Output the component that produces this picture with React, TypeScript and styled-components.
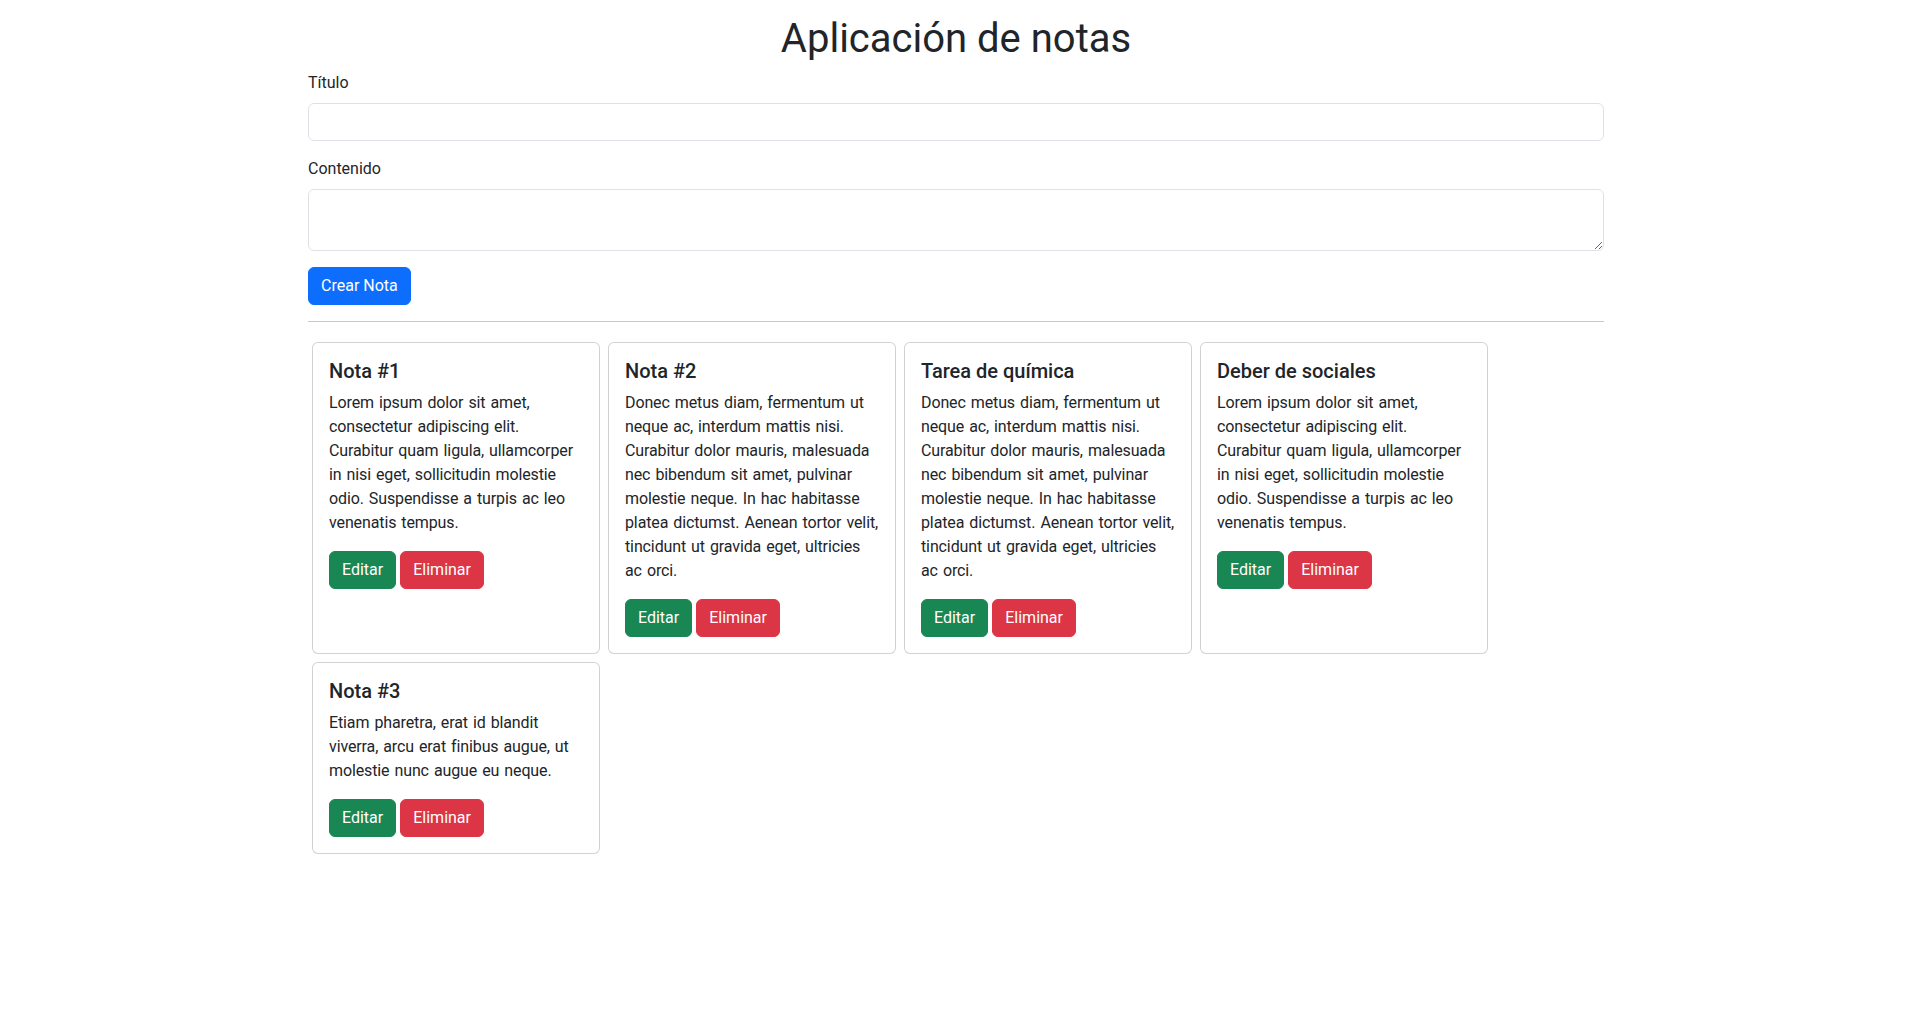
import React from "react";
import styled, { createGlobalStyle } from "styled-components";

const GlobalStyle = createGlobalStyle`
  *, *::before, *::after { box-sizing: border-box; }
  body {
    margin: 0;
    font-family: Roboto, "Noto Sans", "Liberation Sans", sans-serif;
    font-size: 16px;
    line-height: 1.5;
    color: #212529;
    background: #fff;
  }
`;

const Container = styled.div`
  width: 100%;
  max-width: 1320px;
  margin: 0 auto;
  padding: 15px 12px 0;
`;

const Title = styled.h1`
  margin: 0 0 8px;
  font-size: 40px;
  font-weight: 400;
  line-height: 1.2;
  text-align: center;
`;

const FormGroup = styled.div`
  margin-bottom: 16px;
`;

const Label = styled.label`
  display: inline-block;
  margin-bottom: 8px;
`;

const fieldCss = `
  display: block;
  width: 100%;
  padding: 6px 12px;
  font: inherit;
  font-size: 16px;
  line-height: 1.5;
  color: #212529;
  background: #fff;
  border: 1px solid #dee2e6;
  border-radius: 6px;
  outline: none;
`;

const Input = styled.input`
  ${fieldCss}
  height: 38px;
`;

const TextArea = styled.textarea`
  ${fieldCss}
  height: 62px;
  resize: vertical;
`;

const Button = styled.button<{ $variant: "primary" | "success" | "danger" }>`
  display: inline-block;
  padding: 6px 12px;
  font: inherit;
  font-size: 16px;
  line-height: 1.5;
  color: #fff;
  border-radius: 6px;
  cursor: pointer;
  background: ${(p) =>
    p.$variant === "primary" ? "#0d6efd" : p.$variant === "success" ? "#198754" : "#dc3545"};
  border: 1px solid
    ${(p) =>
      p.$variant === "primary" ? "#0d6efd" : p.$variant === "success" ? "#198754" : "#dc3545"};
`;

const Divider = styled.hr`
  margin: 16px 0;
  border: 0;
  border-top: 1px solid #212529;
  opacity: 0.25;
`;

const CardGrid = styled.div`
  display: flex;
  flex-wrap: wrap;
`;

const Card = styled.div`
  width: 288px;
  margin: 4px;
  display: flex;
  flex-direction: column;
  border: 1px solid rgba(0, 0, 0, 0.175);
  border-radius: 6px;
  background: #fff;
`;

const CardBody = styled.div`
  flex: 1 1 auto;
  padding: 16px;
`;

const CardTitle = styled.h5`
  margin: 0 0 8px;
  font-size: 20px;
  font-weight: 500;
  line-height: 1.2;
`;

const CardText = styled.p`
  margin: 0 0 16px;
  letter-spacing: -0.12px;
  word-spacing: 1.2px;
`;

const ButtonRow = styled.div`
  display: flex;
  gap: 4px;
`;

const notes = [
  {
    title: "Nota #1",
    text: "Lorem ipsum dolor sit amet, consectetur adipiscing elit. Curabitur quam ligula, ullamcorper in nisi eget, sollicitudin molestie odio. Suspendisse a turpis ac leo venenatis tempus.",
  },
  {
    title: "Nota #2",
    text: "Donec metus diam, fermentum ut neque ac, interdum mattis nisi. Curabitur dolor mauris, malesuada nec bibendum sit amet, pulvinar molestie neque. In hac habitasse platea dictumst. Aenean tortor velit, tincidunt ut gravida eget, ultricies ac orci.",
  },
  {
    title: "Tarea de química",
    text: "Donec metus diam, fermentum ut neque ac, interdum mattis nisi. Curabitur dolor mauris, malesuada nec bibendum sit amet, pulvinar molestie neque. In hac habitasse platea dictumst. Aenean tortor velit, tincidunt ut gravida eget, ultricies ac orci.",
  },
  {
    title: "Deber de sociales",
    text: "Lorem ipsum dolor sit amet, consectetur adipiscing elit. Curabitur quam ligula, ullamcorper in nisi eget, sollicitudin molestie odio. Suspendisse a turpis ac leo venenatis tempus.",
  },
  {
    title: "Nota #3",
    text: "Etiam pharetra, erat id blandit viverra, arcu erat finibus augue, ut molestie nunc augue eu neque.",
  },
];

export default function App() {
  return (
    <>
      <GlobalStyle />
      <Container>
        <Title>Aplicación de notas</Title>
        <FormGroup>
          <Label htmlFor="titulo">Título</Label>
          <Input id="titulo" type="text" />
        </FormGroup>
        <FormGroup>
          <Label htmlFor="contenido">Contenido</Label>
          <TextArea id="contenido" rows={2} />
        </FormGroup>
        <Button $variant="primary">Crear Nota</Button>
        <Divider />
        <CardGrid>
          {notes.map((n, i) => (
            <Card key={i}>
              <CardBody>
                <CardTitle>{n.title}</CardTitle>
                <CardText>{n.text}</CardText>
                <ButtonRow>
                  <Button $variant="success">Editar</Button>
                  <Button $variant="danger">Eliminar</Button>
                </ButtonRow>
              </CardBody>
            </Card>
          ))}
        </CardGrid>
      </Container>
    </>
  );
}
